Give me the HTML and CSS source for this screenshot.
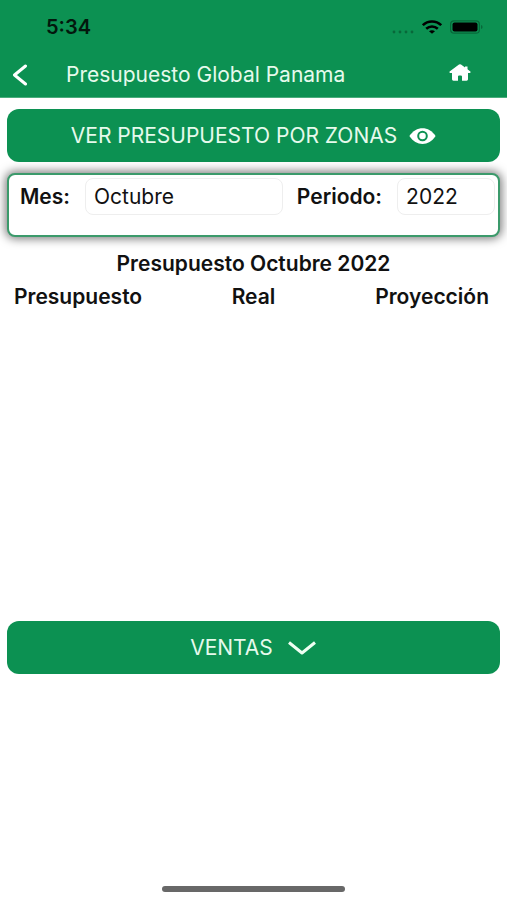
FILE: index.html
```html
<!DOCTYPE html>
<html lang="es">
<head>
<meta charset="utf-8">
<meta name="viewport" content="width=device-width, initial-scale=1">
<title>Presupuesto Global Panama</title>
<link rel="stylesheet" href="styles.css">
</head>
<body>
<header class="top">
  <div class="status">
    <span class="clock">5:34</span>
    <div class="indicators">
      <svg width="22" height="4" viewBox="0 0 22 4" aria-hidden="true"><g fill="#08683a"><circle cx="2" cy="2" r="1.4"/><circle cx="8" cy="2" r="1.4"/><circle cx="14" cy="2" r="1.4"/><circle cx="20" cy="2" r="1.4"/></g></svg>
      <svg width="20" height="14" viewBox="0 0 20 14" aria-hidden="true"><g fill="none" stroke="#000" stroke-width="2.6"><path d="M.8 5.2C5.8.2 14.2.2 19.2 5.2"/><path d="M4.2 8.8c3.400-3 8.200-3 11.600 0"/></g><path d="M7 11.200c1.800-1.300 4.200-1.300 6 0L10 13.800z"/></svg>
      <svg width="33" height="14" viewBox="0 0 33 14" aria-hidden="true"><rect x=".6" y=".8" width="28.800" height="12.400" rx="3.500" fill="none" stroke="#08683a" stroke-width="1.200"/><rect x="2.500" y="2.500" width="25" height="9" rx="2"/><path d="M31 5q1.600.6 1.600 2T31 9z" fill="#08683a"/></svg>
    </div>
  </div>
  <nav class="bar">
    <a class="back" href="#" aria-label="Volver"><svg width="16" height="22" viewBox="0 0 16 22"><path d="M13.500 2 2.500 11l11 9" fill="none" stroke="#fff" stroke-width="3" stroke-linecap="round" stroke-linejoin="round"/></svg></a>
    <h1>Presupuesto Global Panama</h1>
    <a class="home" href="#" aria-label="Inicio"><svg width="22" height="17" viewBox="0 0 22 17"><path d="M10 .6Q11-.2 12 .6L21.400 7.600Q22 9 20.600 9H19v6.300q0 1.400-1.400 1.400H13V12.500q0-1.100-1.100-1.100H10.100Q9 11.400 9 12.500v4.200H4.400Q3 16.700 3 15.300V9H1.400Q0 9 .6 7.600z" fill="#fff"/><path d="M16 2.500h2.500V6L16 4z" fill="#fff"/></svg></a>
  </nav>
</header>
<main>
  <button class="action" type="button">VER PRESUPUESTO POR ZONAS
    <svg width="27" height="16" viewBox="0 0 27 16" aria-hidden="true"><path d="M.4 8C7-2.500 20-2.500 26.600 8 20 18.500 7 18.500.4 8z" fill="#fff"/><circle cx="13.500" cy="8" r="4.300" fill="none" stroke="#0c9152" stroke-width="2"/></svg>
  </button>
  <form class="filters">
    <label for="mes">Mes:</label>
    <select id="mes" class="month"><option>Octubre</option></select>
    <label for="periodo">Periodo:</label>
    <select id="periodo" class="year"><option>2022</option></select>
  </form>
  <section class="results">
    <h2>Presupuesto Octubre 2022</h2>
    <table>
      <thead><tr><th>Presupuesto</th><th>Real</th><th>Proyección</th></tr></thead>
    </table>
  </section>
  <button class="action sales" type="button">VENTAS
    <svg width="30" height="16" viewBox="0 0 30 16" aria-hidden="true"><path d="M2 2.500 15 13 28 2.500" fill="none" stroke="#effff3" stroke-width="3" stroke-linejoin="round"/></svg>
  </button>
</main>
<footer><div class="handle"></div></footer>
</body>
</html>
```
FILE: styles.css
```css
* {
  box-sizing: border-box;
}

body {
  margin: 0;
  min-height: 100vh;
  display: flex;
  flex-direction: column;
  background: #fff;
  color: #111;
  font: 21px/24px Inter, "Liberation Sans", sans-serif;
}

svg {
  display: block;
  flex: none;
}

.top {
  background: #0c9152;
  border-bottom: 1px solid #4aad7c;
}

.status {
  display: flex;
  align-items: center;
  justify-content: space-between;
  height: 54px;
  padding: 0 24px 0 46px;
}

.clock {
  color: #03180d;
  font-size: 20px;
  font-weight: 600;
}

.indicators {
  display: flex;
  align-items: center;
  gap: 8px;
}

.indicators svg:first-child {
  align-self: flex-end;
}

.bar {
  display: flex;
  align-items: center;
  height: 43px;
  padding: 0 36px 2px 12px;
}

.back {
  width: 54px;
}

h1 {
  flex: 1;
  margin: 0;
  color: #e6faec;
  font-size: 21px;
  font-weight: 400;
}

.home {
  padding-bottom: 4px;
}

main {
  flex: 1;
  display: flex;
  flex-direction: column;
  padding: 11px 7px 0;
}

.action {
  display: flex;
  align-items: center;
  justify-content: center;
  gap: 12px;
  width: 100%;
  min-height: 53px;
  padding: 0;
  border: 0;
  border-radius: 12px;
  background: #0c9152;
  color: #e6faec;
  font: inherit;
}

.sales {
  gap: 14px;
}

.filters {
  display: flex;
  align-items: flex-start;
  margin-top: 11px;
  padding: 3px 3px 19px 11px;
  border: 2px solid #3b9a6b;
  border-radius: 8px;
  background: #fff;
  box-shadow: 0 0 10px 2px rgba(0, 0, 0, 0.5);
}

.filters label {
  padding: 7px 0;
  font-weight: 600;
}

select {
  appearance: none;
  height: 37px;
  min-width: 0;
  padding: 0 8px;
  border: 1px solid #eee;
  border-radius: 8px;
  background: #fff;
  color: #111;
  font: inherit;
}

.month {
  flex: 9;
  margin: 0 14px 0 15px;
}

.year {
  flex: 4;
  margin-left: 15px;
}

.results {
  min-height: 384px;
  padding-top: 15px;
}

h2 {
  margin: 0 0 4px;
  font-size: 21px;
  font-weight: 600;
  text-align: center;
}

table {
  width: 100%;
  border-collapse: collapse;
}

th {
  width: 33%;
  padding: 5px 7px;
  font-weight: 600;
  text-align: center;
}

th:first-child {
  text-align: left;
}

th:last-child {
  padding-right: 11px;
  text-align: right;
}

footer {
  display: flex;
  justify-content: center;
  padding: 8px 0;
}

.handle {
  width: 36%;
  height: 6px;
  border-radius: 3px;
  background: #686868;
}
```
